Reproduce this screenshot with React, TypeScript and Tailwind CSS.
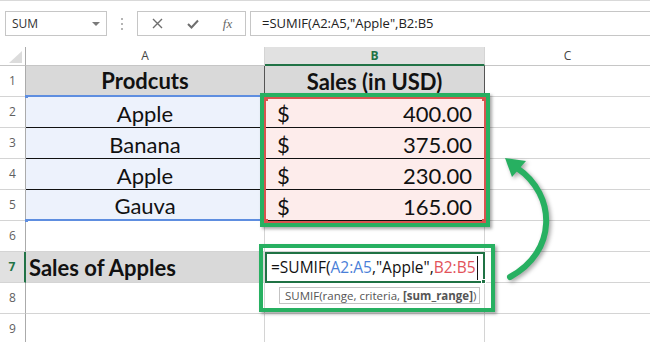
import React from "react";

const items = ["Apple", "Banana", "Apple", "Gauva"];
const amounts = ["400.00", "375.00", "230.00", "165.00"];

function RowHeader({ n }: { n: number }) {
  const active = n === 7;
  return (
    <div
      className={
        active
          ? "flex items-center justify-center border-b border-[#d4d4d4] border-r-2 border-r-[#217346] bg-[#e1e1e1] text-[12px] font-bold text-[#217346]"
          : "flex items-center justify-center border-b border-r border-[#d4d4d4] border-r-[#ababab] bg-white text-[12px] text-[#5f5f5f]"
      }
    >
      {n}
    </div>
  );
}

export default function App() {
  const cellText = "font-['Lato',sans-serif] text-[22px] leading-[25px] text-[#111]";
  return (
    <div className="relative w-[650px] h-[342px] overflow-hidden bg-white font-['Open_Sans',sans-serif]">
      {/* Formula bar */}
      <div className="h-[47px] border-t border-[#d9d9d9] flex items-start pt-[10px]">
        <div className="ml-[5px] w-[102px] h-[25px] border border-[#c6c6c6] flex items-center justify-between pl-[6px] pr-[6px]">
          <span className="text-[12px] text-[#333]">SUM</span>
          <span className="w-0 h-0 border-l-[4px] border-r-[4px] border-t-[4px] border-l-transparent border-r-transparent border-t-[#7a7a7a]"></span>
        </div>
        <div className="w-[30px] h-[25px] flex flex-col items-center justify-center gap-[3px]">
          <span className="w-[2px] h-[2px] bg-[#b5b5b5]"></span>
          <span className="w-[2px] h-[2px] bg-[#b5b5b5]"></span>
          <span className="w-[2px] h-[2px] bg-[#b5b5b5]"></span>
        </div>
        <div className="w-[109px] h-[25px] border border-[#c6c6c6] flex items-center pl-[2px]">
          <div className="w-[35px] flex justify-center">
            <svg width="11" height="11" viewBox="0 0 11 11">
              <path d="M1 1 L10 10 M10 1 L1 10" stroke="#6e6e6e" strokeWidth="1.4" fill="none" />
            </svg>
          </div>
          <div className="w-[35px] flex justify-center">
            <svg width="12" height="10" viewBox="0 0 12 10">
              <path d="M1 5 L4.5 8.5 L11 1.5" stroke="#6e6e6e" strokeWidth="2" fill="none" />
            </svg>
          </div>
          <div className="w-[35px] flex justify-center">
            <span className="font-['Liberation_Serif',serif] italic text-[13px] text-[#666]">fx</span>
          </div>
        </div>
        <div className="ml-[4px] flex-1 h-[25px] border border-r-0 border-[#c6c6c6] flex items-center pl-[11px] text-[13px] text-[#222]">
          =SUMIF(A2:A5,"Apple",B2:B5
        </div>
      </div>

      {/* Grid */}
      <div className="grid grid-cols-[26px_239px_220px_165px] grid-rows-[19px_repeat(9,31px)]">
        {/* header row */}
        <div className="relative border-r border-b border-r-[#ababab] border-b-[#c6c6c6] bg-white">
          <svg className="absolute left-[9px] top-[4px]" width="13" height="12" viewBox="0 0 13 12">
            <polygon points="13,0 13,12 0,12" fill="#dcdcdc" />
          </svg>
        </div>
        <div className="flex items-center justify-center border-r border-b border-r-[#d4d4d4] border-b-[#c6c6c6] bg-white text-[12px] text-[#444]">
          A
        </div>
        <div className="flex items-center justify-center border-r border-r-[#d4d4d4] border-b-2 border-b-[#217346] bg-[#e1e1e1] text-[12px] font-bold text-[#217346]">
          B
        </div>
        <div className="flex items-center justify-center border-b border-b-[#c6c6c6] bg-white text-[12px] text-[#444]">
          C
        </div>

        {/* row 1 */}
        <RowHeader n={1} />
        <div className={`flex items-end justify-center pb-[2px] bg-[#d9d9d9] border-r border-r-[#555] border-b-2 border-b-[#5e8ee0] font-bold ${cellText}`}>
          Prodcuts
        </div>
        <div className={`flex items-end justify-center pb-[2px] bg-[#d9d9d9] border-r border-b border-r-[#555] border-b-[#555] font-bold ${cellText}`}>
          Sales (in USD)
        </div>
        <div className="border-b border-[#d4d4d4]"></div>

        {/* rows 2-5 */}
        {items.map((it, i) => (
          <React.Fragment key={i}>
            <RowHeader n={i + 2} />
            <div
              className={`flex items-end justify-center pb-[1px] bg-[#edf2fc] border-r border-r-[#555] ${
                i === 3 ? "border-b-2 border-b-[#5e8ee0]" : "border-b border-b-[#111]"
              } ${cellText}`}
            >
              {it}
            </div>
            <div
              className={`flex items-end justify-between pb-[1px] pl-[12px] pr-[12px] bg-[#fdeceb] border-r border-b border-r-[#555] border-b-[#111] ${cellText}`}
            >
              <span>$</span>
              <span>{amounts[i]}</span>
            </div>
            <div className="border-b border-[#d4d4d4]"></div>
          </React.Fragment>
        ))}

        {/* row 6 */}
        <RowHeader n={6} />
        <div className="border-r border-b border-[#d4d4d4]"></div>
        <div className="border-r border-b border-[#d4d4d4]"></div>
        <div className="border-b border-[#d4d4d4]"></div>

        {/* row 7 */}
        <RowHeader n={7} />
        <div className={`flex items-end pl-[3px] pb-[2px] bg-[#d9d9d9] border-b border-[#d4d4d4] font-bold ${cellText}`}>
          Sales of Apples
        </div>
        <div className="relative flex items-center pl-[4px] bg-white border-2 border-[#1f7244] text-[15.5px] text-[#111] whitespace-nowrap">
          <span>=SUMIF(</span>
          <span className="text-[#4a7fd8]">A2:A5</span>
          <span>,"Apple",</span>
          <span className="text-[#e2535a]">B2:B5</span>
          <span className="ml-[1px] w-[1px] h-[24px] bg-[#111]"></span>
          <span className="absolute right-[-3px] bottom-[-3px] w-[5px] h-[5px] bg-[#1f7244] border border-white"></span>
        </div>
        <div className="border-b border-[#d4d4d4]"></div>

        {/* rows 8-9 */}
        {[8, 9].map((n) => (
          <React.Fragment key={n}>
            <RowHeader n={n} />
            <div className="border-r border-b border-[#d4d4d4]"></div>
            <div className="border-r border-b border-[#d4d4d4]"></div>
            <div className="border-b border-[#d4d4d4]"></div>
          </React.Fragment>
        ))}
      </div>

      {/* Range highlight handles (blue) */}
      <span className="absolute left-[25px] top-[95px] w-[3px] h-[3px] bg-[#5e8ee0]"></span>
      <span className="absolute left-[25px] top-[219px] w-[3px] h-[3px] bg-[#5e8ee0]"></span>

      {/* Red range highlight for B2:B5 */}
      <div className="absolute left-[264px] top-[97px] w-[222px] h-[126px] border-2 border-[#d9534f]">
        <span className="absolute left-[-2px] top-[-2px] w-[4px] h-[4px] bg-[#d9534f]"></span>
        <span className="absolute right-[-2px] top-[-2px] w-[4px] h-[4px] bg-[#d9534f]"></span>
        <span className="absolute left-[-2px] bottom-[-2px] w-[4px] h-[4px] bg-[#d9534f]"></span>
        <span className="absolute right-[-2px] bottom-[-2px] w-[4px] h-[4px] bg-[#d9534f]"></span>
      </div>

      {/* Green annotation boxes */}
      <div className="absolute left-[260px] top-[93px] w-[230px] h-[134px] border-4 border-[#27b061] shadow-[2px_2px_3px_rgba(0,0,0,0.35)]"></div>
      <div className="absolute left-[259px] top-[244px] w-[236px] h-[68px] border-4 border-[#27b061] shadow-[2px_2px_3px_rgba(0,0,0,0.35)]"></div>

      {/* Tooltip */}
      <div className="absolute left-[279px] top-[287px] w-[201px] h-[17px] border border-[#c3c3c3] bg-white flex items-center pl-[5px] text-[11.5px] text-[#555] whitespace-nowrap">
        SUMIF(range, criteria, <span className="ml-[3px] font-bold">[sum_range]</span>)
      </div>

      {/* Curved arrow */}
      <svg
        className="absolute left-[490px] top-[150px] drop-shadow-[2px_2px_2px_rgba(0,0,0,0.35)]"
        width="80"
        height="140"
        viewBox="490 150 80 140"
      >
        <path d="M510 277 C 557 252 557 195 517 168" stroke="#27b061" strokeWidth="6" strokeLinecap="round" fill="none" />
        <polygon points="505,158 526,161 512,177" fill="#27b061" />
      </svg>
    </div>
  );
}
